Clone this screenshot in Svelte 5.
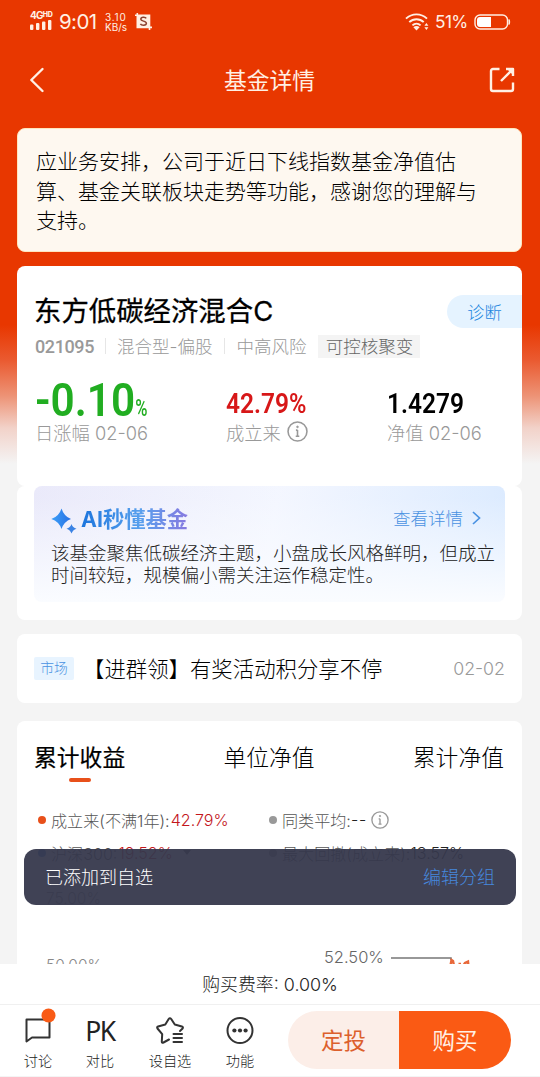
<!-- Fund detail page -->
<script lang="ts">
  const tabs = ['累计收益', '单位净值', '累计净值'];
  let active = $state(0);
</script>

{#snippet info(size: number)}
  <svg class="info" width={size} height={size} viewBox="0 0 20 20" fill="none" stroke="#999" stroke-width="1.5">
    <circle cx="10" cy="10" r="9" />
    <path d="M10 8.5V14.5M8.300 14.500h3.400M8.500 8.700H10" />
    <circle cx="10" cy="5.6" r=".8" fill="#999" stroke-width=".8" />
  </svg>
{/snippet}

<div class="screen">
  <main>
    <div class="status">
      <div class="signal">
        <b>4G<i>HD</i></b>
        <svg width="22" height="10" viewBox="0 0 22 10" fill="#fff0e4">
          <rect x="0" y="4.5" width="3.4" height="5.5" rx="1" />
          <rect x="6" y="3" width="3.4" height="7" rx="1" />
          <rect x="12" y="1.5" width="3.4" height="8.5" rx="1" />
          <rect x="18" y="0" width="3.4" height="10" rx="1" />
        </svg>
      </div>
      <span class="time">9:01</span>
      <span class="speed"><span>3.10</span><br />KB/s</span>
      <svg class="shot" width="17" height="17" viewBox="0 0 17 17">
        <path d="M0 2.2h14.5V17M2.3 0v14.4H17" fill="none" stroke="#fff0e4" stroke-width="1.6" />
        <path d="M2 2h12.7v12.6H2z" fill="#fff0e4" />
        <path d="M11.2 5.4C10.5 3.9 5.9 3.8 5.8 6.2c0 2.4 5.6 1.5 5.6 4.1 0 2.5-5.1 2.3-6 .5" fill="none" stroke="#8d4230" stroke-width="1.5" />
      </svg>
      <svg class="wifi" width="24" height="18" viewBox="0 0 24 18" fill="none" stroke="#fff0e4" stroke-width="1.9">
        <path d="M1 5.6C7-.1 16-.1 22 5.6M4.3 9.2c4-4 10.4-4 14.4 0M7.4 12.4c2.4-2.2 5.8-2.2 8.2 0" />
        <path d="M8.4 14.2c1.8-1.7 4.4-1.7 6.2 0L11.5 17.600z" fill="#fff0e4" stroke="none" />
        <path d="M19.4 12.800h4L21.400 10zM19.400 14.200h4l-2 2.800z" fill="#fff0e4" stroke="none" />
      </svg>
      <span class="percent">51%</span>
      <svg width="37" height="16" viewBox="0 0 37 16">
        <rect x="1" y="1" width="32.5" height="14" rx="5" fill="none" stroke="#fff0e4" stroke-width="1.4" />
        <path d="M6 3h11v10H6a3 3 0 0 1-3-3V6a3 3 0 0 1 3-3z" fill="#fff" />
        <path d="M35 5.5q1.5 2.5 0 5z" fill="#fff0e4" stroke="#fff0e4" />
      </svg>
    </div>

    <nav>
      <svg width="16" height="26" viewBox="0 0 16 26" fill="none" stroke="#fff0e4" stroke-width="2.4" stroke-linecap="round" stroke-linejoin="round">
        <path d="M13.5 2 2.3 13l11.2 11" />
      </svg>
      <h1>基金详情</h1>
      <svg width="26" height="26" viewBox="0 0 26 26" fill="none" stroke="#fff0e4" stroke-width="2.4" stroke-linejoin="round">
        <path d="M10.5 2H4a2 2 0 0 0-2 2v18a2 2 0 0 0 2 2h18a2 2 0 0 0 2-2v-6.500M12 14 23 3" />
        <path d="M17 2h7v7" />
        <path d="M18 2h6v6z" fill="#fff0e4" stroke="none" />
      </svg>
    </nav>

    <section class="notice">
      应业务安排，公司于近日下线指数基金净值估<br />算、基金关联板块走势等功能，感谢您的理解与<br />支持。
    </section>

    <section class="card fund">
      <div class="title">
        <h2>东方低碳经济混合C</h2>
        <button class="diagnose">诊断</button>
      </div>
      <div class="tags">
        <b>021095</b>
        <span class="sep">混合型-偏股</span>
        <span class="sep">中高风险</span>
        <span class="theme">可控核聚变</span>
      </div>
      <div class="figures">
        <div class="change">
          <strong>-0.10<small>%</small></strong>
          <span>日涨幅 02-06</span>
        </div>
        <div class="since">
          <strong>42.79<small>%</small></strong>
          <span>成立来 {@render info(21)}</span>
        </div>
        <div class="nav-value">
          <strong>1.4279</strong>
          <span>净值 02-06</span>
        </div>
      </div>
    </section>

    <section class="card ai">
      <div class="ai-box">
        <header>
          <svg width="26" height="26" viewBox="0 0 26 26">
            <defs>
              <linearGradient id="spark" x1="0" y1="0" x2="1" y2="0">
                <stop offset="0" stop-color="#3da0f8" />
                <stop offset="1" stop-color="#2871e4" />
              </linearGradient>
            </defs>
            <path d="M10.5.5Q13 8.500 20 11q-7 2.500-9.500 10Q8 13.500.300 11 8 8.500 10.500.500z" fill="url(#spark)" />
            <path d="M20.500 16q1.200 3.700 5 4.800-3.800 1.200-5 4.800-1.200-3.600-5-4.800 3.800-1.100 5-4.800z" fill="#3b83e4" />
          </svg>
          <h3>AI秒懂基金</h3>
          <span class="more">查看详情</span>
          <svg width="9" height="14" viewBox="0 0 9 14" fill="none" stroke="#4a92e2" stroke-width="1.7">
            <path d="m1 1 6.500 6L1 13" />
          </svg>
        </header>
        <p>该基金聚焦低碳经济主题，小盘成长风格鲜明，但成立<br />时间较短，规模偏小需关注运作稳定性。</p>
      </div>
    </section>

    <section class="card market">
      <span class="label">市场</span>
      <span class="headline">【进群领】有奖活动积分享不停</span>
      <time>02-02</time>
    </section>

    <section class="card chart">
      <div class="tabs">
        {#each tabs as tab, i}
          <button class:active={active === i} onclick={() => (active = i)}>{tab}</button>
        {/each}
      </div>
      <div class="legend">
        <div><i style="background: #e8501a"></i>成立来(不满1年):<em>42.79%</em></div>
        <div><i></i>同类平均:<b class="dash">--</b>{@render info(18)}</div>
        <div><i style="background: #3a7bd5"></i>沪深300:<em>19.52%</em><u></u></div>
        <div><i></i>最大回撤(成立来):<b>13.57%</b></div>
      </div>
      <div class="axis">75.00%</div>
      <div class="plot">
        <span class="tick">50.00%</span>
        <span class="peak">52.50%</span>
        <svg width="82" height="24" viewBox="0 0 82 24" fill="none">
          <path d="M0 11h60v2" stroke="#777" stroke-width="1.5" />
          <path d="m59 21 1.500-8 1.500 1 1.500 7M67.500 17h2.500M72 19l2-3 3-1.500.500 5" stroke="#e8683a" stroke-width="2.4" />
        </svg>
      </div>
    </section>
  </main>

  <div class="toast">
    <span>已添加到自选</span>
    <a href="#group">编辑分组</a>
  </div>

  <footer>
    <div class="fee">购买费率: 0.00%</div>
    <div class="bar">
      <div class="item">
        <svg width="30" height="32" viewBox="0 0 30 32" fill="none" stroke="#333" stroke-width="2" stroke-linejoin="round">
          <path d="M3.500 6.500h23v18H9l-5.500 4z" />
          <circle cx="25.5" cy="2.5" r="7" fill="#f95b16" stroke="none" />
        </svg>
        <span>讨论</span>
      </div>
      <div class="item">
        <span class="pk">PK</span>
        <span>对比</span>
      </div>
      <div class="item wide">
        <svg width="30" height="32" viewBox="0 0 30 32" fill="none" stroke="#333" stroke-width="2" stroke-linejoin="round" stroke-linecap="round">
          <path d="m14 26.500-5.500 3q-1.800.800-1.700-1l.400-7.300-4.700-5.700q-1-1.500.600-2l7.200-2 3.400-5.500q1.200-1.700 2.500 0l3.600 5.500 7 2q1.800.500.800 2L25 18" />
          <path d="M18.500 21h8.500M18.500 25h8.500M18.500 29h8.500" />
        </svg>
        <span>设自选</span>
      </div>
      <div class="item">
        <svg width="30" height="32" viewBox="0 0 30 32" fill="none" stroke="#333" stroke-width="2">
          <circle cx="15" cy="17.5" r="12.5" />
          <g fill="#333" stroke="none">
            <circle cx="9.4" cy="17.5" r="2.1" />
            <circle cx="15" cy="17.5" r="2.1" />
            <circle cx="20.6" cy="17.5" r="2.1" />
          </g>
        </svg>
        <span>功能</span>
      </div>
      <div class="buttons">
        <button class="plan">定投</button>
        <button class="buy">购买</button>
      </div>
    </div>
  </footer>
</div>

<style>
:global(body) {
  margin: 0;
}
.screen {
  position: relative;
  display: flex;
  flex-direction: column;
  width: 540px;
  height: 1077px;
  overflow: hidden;
  font-family: Inter, "Noto Sans CJK SC", sans-serif;
  font-weight: 300;
  color: #000;
  background: linear-gradient(#e83700 325px, #ea5a30 360px, #ed9376 396px, #f2d2c9 428px, #f4f4f4 464px);
}
.screen * {
  box-sizing: border-box;
  white-space: nowrap;
}
svg {
  flex: none;
  display: block;
}
button {
  border: 0;
  padding: 0;
  background: none;
  font: inherit;
  color: inherit;
}
h1, h2, h3, p {
  margin: 0;
}
i, em {
  font-style: normal;
}
main {
  flex: 1;
  min-height: 0;
  overflow: hidden;
}

.status {
  display: flex;
  align-items: center;
  height: 43px;
  padding: 0 29px 0 30px;
  color: #fff0e4;
}
.signal {
  width: 24px;
  margin-top: -3px;
}
.signal b {
  display: block;
  height: 8px;
  margin-bottom: 1px;
  font-size: 10px;
  font-weight: 700;
  line-height: 8px;
  letter-spacing: -0.8px;
}
.signal i {
  font-size: 7px;
  font-weight: 800;
  vertical-align: 2px;
  letter-spacing: -0.2px;
}
.time {
  width: 41px;
  margin-left: 5px;
  font-size: 20.5px;
  font-weight: 400;
  letter-spacing: -0.6px;
}
.speed {
  width: 24px;
  margin-left: 5px;
  font-size: 10px;
  font-weight: 400;
  line-height: 10px;
}
.speed span {
  letter-spacing: 0.8px;
}
.shot {
  margin-left: 6px;
}
.wifi {
  margin-left: auto;
}
.percent {
  width: 34px;
  margin: 0 5px 0 6px;
  font-size: 17.3px;
  font-weight: 400;
  letter-spacing: -0.6px;
}

nav {
  display: flex;
  align-items: center;
  justify-content: space-between;
  height: 74px;
  padding: 0 25px 0 29px;
}
h1 {
  margin: -2px 0 0 5px;
  font-size: 22.8px;
  font-weight: 400;
  color: #fff0e4;
}

.notice {
  height: 124px;
  margin: 11px 18px 14px 17px;
  padding: 18px 18px 0;
  border: 1px solid #ffe6bd;
  border-radius: 8px;
  background: #fef8f0;
  font-size: 21px;
  line-height: 29.7px;
}
.card {
  margin: 0 18px 0 17px;
  border-radius: 8px;
  background: #fff;
}

.fund {
  height: 220px;
  padding: 29px 0 0 18px;
}
.title {
  display: flex;
  align-items: center;
  justify-content: space-between;
  height: 33px;
}
h2 {
  margin-left: -1px;
  font-size: 27.4px;
  font-weight: 400;
  line-height: 33px;
  -webkit-text-stroke: 0.3px;
}
.diagnose {
  width: 75px;
  height: 33px;
  padding-bottom: 1px;
  border-radius: 17px 0 0 17px;
  background: #e5f3ff;
  font-size: 17.3px;
  color: #1c86e0;
}
.tags {
  display: flex;
  align-items: center;
  height: 24px;
  margin-top: 6px;
  font-size: 17.5px;
  color: #999;
}
.tags b {
  width: 70px;
  font: 500 18px Roboto, sans-serif;
  letter-spacing: -0.4px;
}
.sep {
  height: 16px;
  margin-right: 12px;
  padding-left: 11px;
  border-left: 1px solid #e6e6e6;
  line-height: 17px;
}
.theme {
  width: 102px;
  height: 23px;
  background: #f4f4f4;
  line-height: 23px;
  text-align: center;
  color: #666;
}
.figures {
  display: flex;
  height: 70px;
  margin-top: 17px;
}
.figures > div {
  display: flex;
  flex-direction: column;
  justify-content: flex-end;
}
.figures strong {
  transform-origin: 0 100%;
  transform: scaleX(0.875);
  font: 600 28px/34px Roboto, sans-serif;
}
.figures span {
  display: flex;
  align-items: center;
  gap: 6px;
  height: 24px;
  font-size: 18.3px;
  line-height: 24px;
  color: #999;
}
.figures span .info {
  margin-top: -3px;
}
.change {
  width: 191px;
}
.figures .change strong {
  transform: scaleX(0.92);
  margin-bottom: -3px;
  font-size: 46px;
  line-height: 32px;
  color: #21ad21;
}
.change small {
  display: inline-block;
  transform: scaleX(0.75);
  transform-origin: 0 50%;
  font-size: 24px;
  font-weight: 500;
}
.since {
  width: 161px;
}
.since strong {
  color: #d71718;
}
.since small {
  font-size: 27px;
}

.ai {
  height: 134px;
  padding: 0 17px;
}
.ai-box {
  height: 116px;
  padding: 18px 10px 0 17px;
  border-radius: 8px;
  background:
    linear-gradient(to top, #fafcff, rgba(250, 252, 255, 0.2) 90%),
    linear-gradient(100deg, #e6e5f9, #f2f5ff 50%, #d3e6ff);
}
.ai-box header {
  display: flex;
  align-items: center;
  height: 30px;
  padding-right: 14px;
}
.ai-box header svg:first-child {
  margin-top: 4px;
}
h3 {
  margin-left: 4px;
  font-size: 21.3px;
  font-weight: 700;
  line-height: 28px;
  background: linear-gradient(90deg, #1c75dd, #58a0ed 55%, #8779e0);
  background-clip: text;
  color: transparent;
}
.more {
  margin: -4px 9px 0 auto;
  font-size: 17.5px;
  color: #4a92e2;
}
.ai-box header svg:last-child {
  margin-top: -2px;
}
.ai-box p {
  margin-top: 8px;
  font-size: 18.5px;
  line-height: 22px;
  color: #222;
}

.market {
  display: flex;
  align-items: center;
  height: 69px;
  margin-top: 14px;
  padding: 0 18px 0 17px;
}
.label {
  width: 40px;
  height: 23px;
  border-radius: 2px;
  background: #e8f4ff;
  font-size: 13.8px;
  line-height: 22px;
  text-align: center;
  color: #4a92e2;
}
.headline {
  margin: -2px 0 0 9px;
  font-size: 21.4px;
}
time {
  margin: -1px -1px 0 auto;
  font-size: 17.8px;
  color: #999;
}

.chart {
  height: 400px;
  margin-top: 18px;
  padding: 21px 18px 0 17px;
}
.tabs {
  display: flex;
  justify-content: space-between;
  height: 41px;
}
.tabs button {
  display: flex;
  flex-direction: column;
  align-items: center;
  font-size: 22.8px;
  line-height: 32px;
}
.tabs .active {
  font-weight: 400;
  -webkit-text-stroke: 0.2px;
}
.tabs .active::after {
  content: "";
  width: 22px;
  height: 4px;
  margin-top: 4px;
  border-radius: 2px;
  background: #e8501a;
}
.legend {
  display: grid;
  grid-template-columns: 231px 1fr;
  grid-auto-rows: 33px;
  margin-top: 20px;
  padding-left: 4px;
  font-size: 16.1px;
  color: #555;
}
.legend div {
  display: flex;
  align-items: center;
}
.legend i {
  width: 8px;
  height: 8px;
  margin-right: 5px;
  border-radius: 50%;
  background: #999;
}
.legend em {
  margin-left: 1px;
  color: #c3161c;
}
.legend b {
  margin-right: 6px;
  font-weight: 300;
  color: #222;
}
.legend .dash {
  margin-right: 4px;
  letter-spacing: 0.8px;
}
.legend u {
  margin-left: 10px;
  border: 4px solid transparent;
  border-top: 5px solid #555;
  border-bottom: 0;
}
.axis {
  margin: 18px 0 0 12px;
  font-size: 15.5px;
  line-height: 24px;
  color: #888;
}
.plot {
  display: flex;
  align-items: flex-start;
  margin-top: 36px;
  padding-left: 12px;
  font-size: 15.5px;
  line-height: 22px;
  color: #888;
}
.tick {
  width: 278px;
  margin-top: 8px;
}
.peak {
  width: 67px;
  font-size: 16.5px;
  line-height: 20px;
  color: #666;
}

/* sits over the lower part of the chart card */
.toast {
  position: absolute;
  top: 849px;
  left: 24px;
  display: flex;
  align-items: center;
  justify-content: space-between;
  width: 492px;
  height: 56px;
  padding: 0 21px 2px;
  border-radius: 12px;
  background: rgba(54, 56, 76, 0.95);
  font-size: 18px;
  color: #fff;
}
.toast a {
  color: #4688dd;
  text-decoration: none;
}

footer {
  height: 113px;
  background: #fff;
}
.fee {
  height: 41px;
  border-bottom: 1px solid #f0f0f0;
  font-size: 17.9px;
  line-height: 41px;
  text-align: center;
  color: #222;
}
.bar {
  display: flex;
  height: 72px;
  padding: 6px 29px 0 7px;
  border-bottom: 1px solid #f4f4f4;
}
.item {
  display: flex;
  flex-direction: column;
  align-items: center;
  width: 62px;
  font-size: 14.2px;
  line-height: 22px;
  color: #222;
}
.item svg, .pk {
  height: 32px;
  margin: 2px 0 5px;
  overflow: visible;
}
.item.wide {
  width: 78px;
}
.pk {
  font: 400 26.5px/36px "Noto Sans", sans-serif;
  letter-spacing: -1.5px;
}
.buttons {
  display: flex;
  width: 223px;
  height: 58px;
  margin-left: auto;
  border-radius: 29px;
  overflow: hidden;
  font-size: 22.5px;
  font-weight: 400;
}
.buttons button {
  padding-bottom: 2px;
}
.plan {
  width: 111px;
  background: #fceee8;
  color: #dc602c;
}
.buy {
  flex: 1;
  background: #fa5a14;
  color: #fff0e4;
}
</style>
